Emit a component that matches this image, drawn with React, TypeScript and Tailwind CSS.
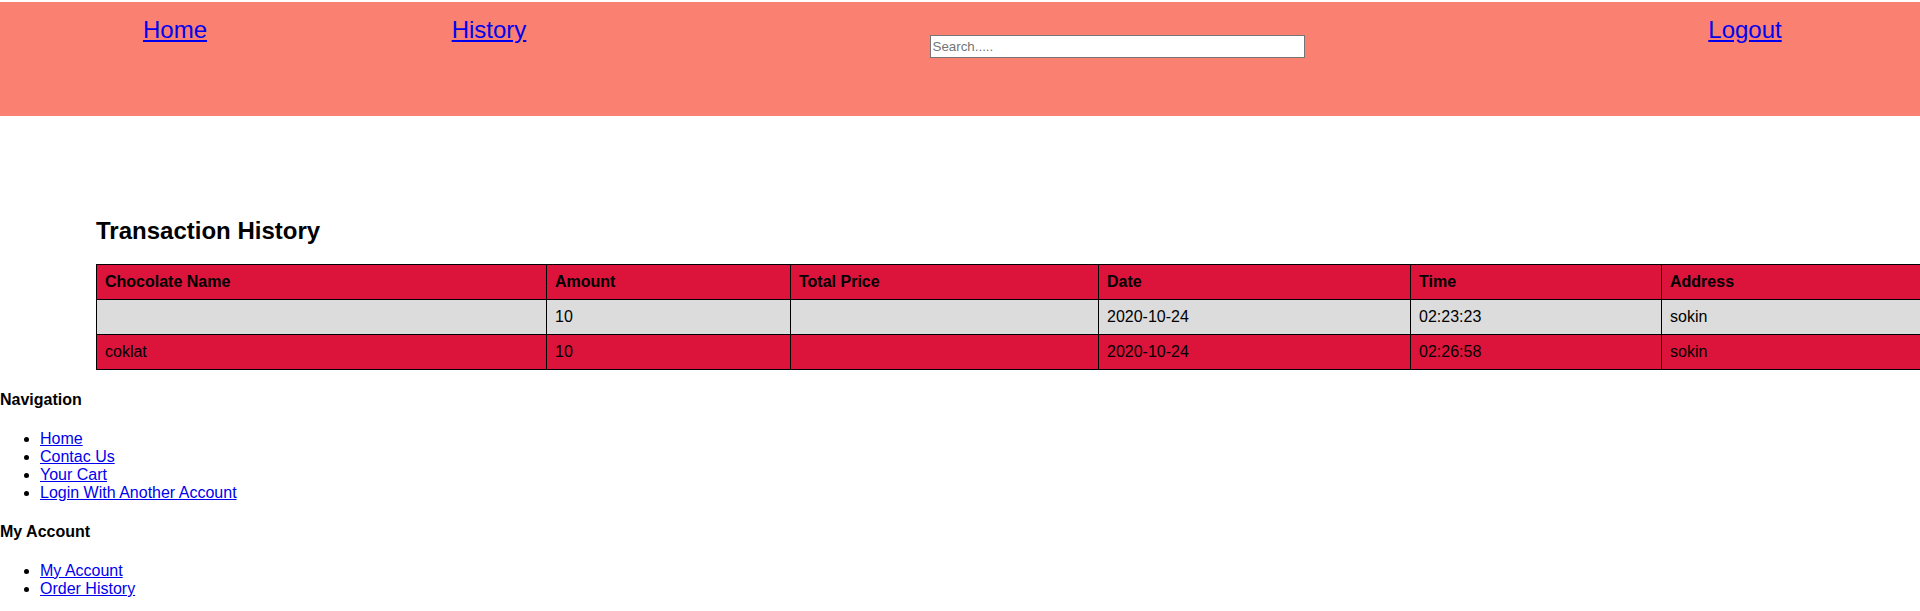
import React from "react";

const rows = [
  { name: "", amount: "10", total: "", date: "2020-10-24", time: "02:23:23", address: "sokin", bg: "bg-[#dcdcdc]" },
  { name: "coklat", amount: "10", total: "", date: "2020-10-24", time: "02:26:58", address: "sokin", bg: "bg-[#dc143c]" },
];

const cell = "border border-black px-2 py-2 text-left align-middle";

export default function App() {
  return (
    <div className="min-h-[611px] bg-white font-['Liberation_Sans',Arial,sans-serif] text-[16px] leading-[normal] text-black">
      <header className="mt-[2px] grid h-[114px] grid-cols-6 bg-[#fa8072] px-[18px]">
        <a href="#" className="mt-[14px] self-start justify-self-center text-[24px] text-[#0000ee] underline">
          Home
        </a>
        <a href="#" className="mt-[14px] self-start justify-self-center text-[24px] text-[#0000ee] underline">
          History
        </a>
        <div />
        <input
          type="text"
          placeholder="Search....."
          className="mt-[33px] h-[23px] w-[375px] self-start justify-self-center border border-[#767676] bg-white px-[2px] text-[13.33px] placeholder:text-[#757575]"
        />
        <div />
        <a href="#" className="mt-[14px] self-start justify-self-center text-[24px] text-[#0000ee] underline">
          Logout
        </a>
      </header>

      <main className="ml-[5%] pt-[101px]">
        <h2 className="mb-[19px] text-[24px] font-bold leading-[28px]">Transaction History</h2>
        <table className="w-full table-fixed border-collapse text-[16px]">
          <thead>
            <tr className="bg-[#dc143c]">
              <th className={`${cell} w-[450px] font-bold`}>Chocolate Name</th>
              <th className={`${cell} w-[244px] font-bold`}>Amount</th>
              <th className={`${cell} w-[308px] font-bold`}>Total Price</th>
              <th className={`${cell} w-[312px] font-bold`}>Date</th>
              <th className={`${cell} w-[251px] font-bold`}>Time</th>
              <th className={`${cell} w-[259px] font-bold`}>Address</th>
            </tr>
          </thead>
          <tbody>
            {rows.map((r, i) => (
              <tr key={i} className={r.bg}>
                <td className={cell}>{r.name}</td>
                <td className={cell}>{r.amount}</td>
                <td className={cell}>{r.total}</td>
                <td className={cell}>{r.date}</td>
                <td className={cell}>{r.time}</td>
                <td className={cell}>{r.address}</td>
              </tr>
            ))}
          </tbody>
        </table>
      </main>

      <footer>
        <h4 className="mt-[21px] mb-[21px] text-[16px] font-bold">Navigation</h4>
        <ul className="list-disc pl-10">
          <li><a href="#" className="text-[#0000ee] underline">Home</a></li>
          <li><a href="#" className="text-[#0000ee] underline">Contac Us</a></li>
          <li><a href="#" className="text-[#0000ee] underline">Your Cart</a></li>
          <li><a href="#" className="text-[#0000ee] underline">Login With Another Account</a></li>
        </ul>
        <h4 className="mt-[21px] mb-[21px] text-[16px] font-bold">My Account</h4>
        <ul className="list-disc pl-10">
          <li><a href="#" className="text-[#0000ee] underline">My Account</a></li>
          <li><a href="#" className="text-[#0000ee] underline">Order History</a></li>
        </ul>
      </footer>
    </div>
  );
}
